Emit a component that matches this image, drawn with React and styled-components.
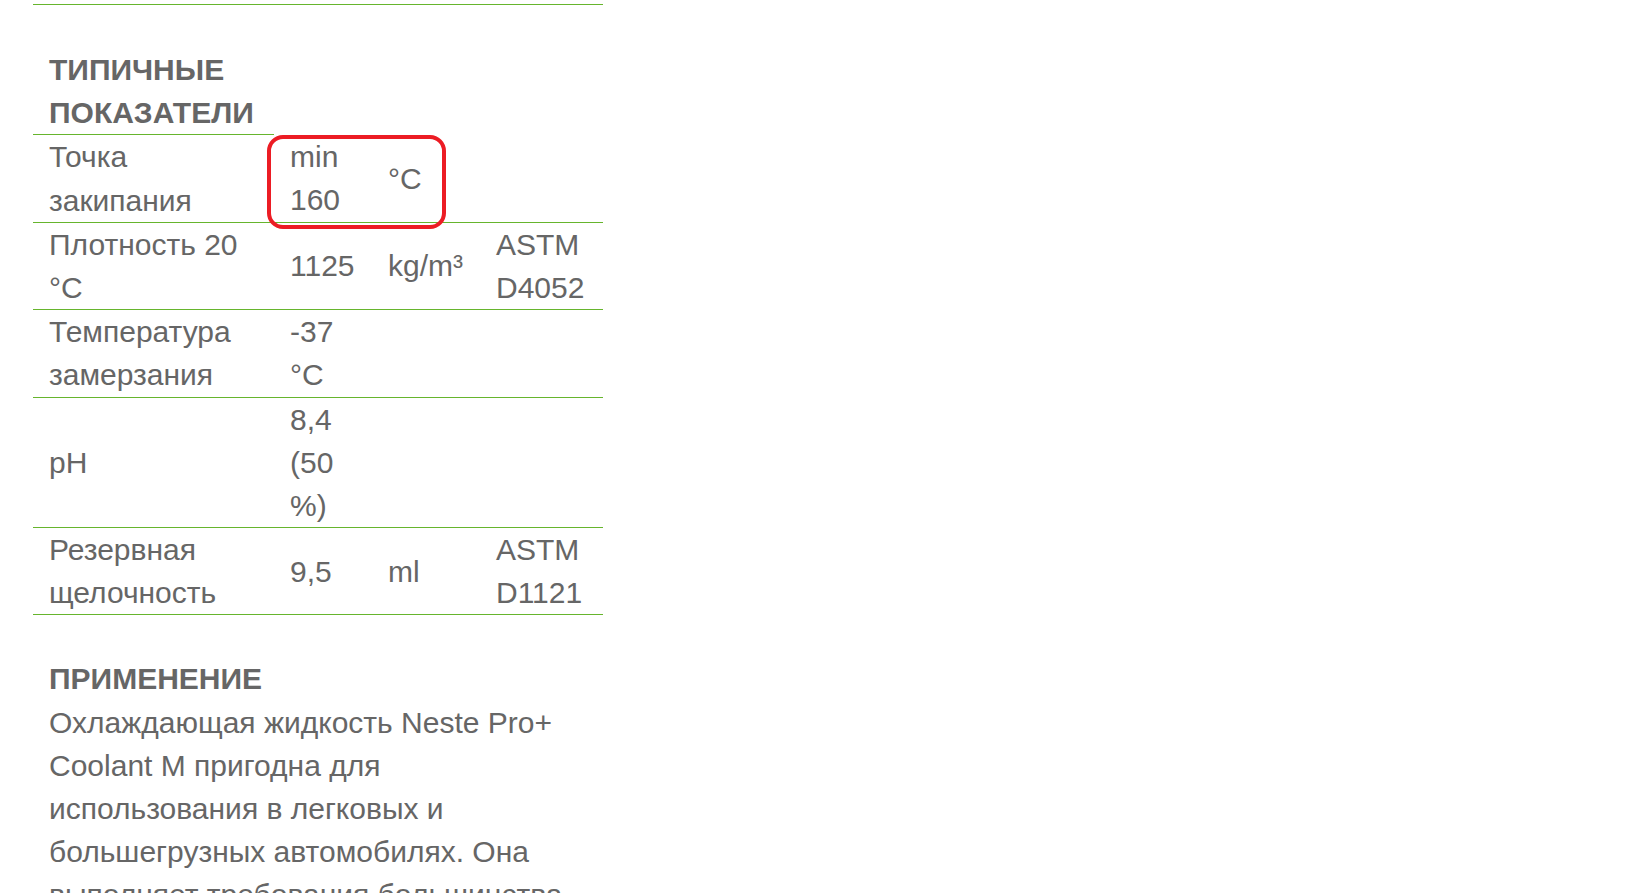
import React from 'react'
import styled, { createGlobalStyle } from 'styled-components'

const GlobalStyle = createGlobalStyle`
  html, body {
    margin: 0;
    padding: 0;
    background: #fff;
  }
  body {
    font-family: "Liberation Sans", Arial, sans-serif;
    font-size: 30px;
    line-height: 1.44;
    color: #666;
  }
`;

const Page = styled.div`
  width: 570px;
  margin-left: 33px;
  padding-top: 4px;
`;

const Divider = styled.div`
  height: 1px;
  background: #66b52d;
`;

const TableWrap = styled.div`
  position: relative;
  margin-top: 43px;
`;

const Table = styled.table`
  width: 570px;
  border-collapse: collapse;
  table-layout: fixed;
`;

const Th = styled.th`
  text-align: left;
  font-weight: 700;
  padding: 0 14px 0 16px;
  vertical-align: bottom;
  border-bottom: ${({ $line }) => ($line ? '1px solid #66b52d' : 'none')};
`;

const Td = styled.td`
  padding: 0 14px 0 16px;
  vertical-align: middle;
  border-bottom: 1px solid #66b52d;
`;

const Highlight = styled.div`
  position: absolute;
  left: 234px;
  top: 87px;
  width: 179px;
  height: 94px;
  box-sizing: border-box;
  border: 4px solid #ec1c24;
  border-radius: 16px;
  pointer-events: none;
`;

const Section = styled.div`
  margin-top: 42px;
  padding: 0 35px 0 16px;
`;

const Heading = styled.div`
  font-weight: 700;
`;

const Text = styled.p`
  margin: 0;
`;

const rows = [
  ['Точка закипания', 'min 160', '°C', ''],
  ['Плотность 20 °C', '1125', 'kg/m³', 'ASTM D4052'],
  ['Температура замерзания', '-37 °C', '', ''],
  ['pH', '8,4 (50 %)', '', ''],
  ['Резервная щелочность', '9,5', 'ml', 'ASTM D1121'],
];

const App = () => {
  return (
    <>
      <GlobalStyle />
      <Page>
        <Divider />
        <TableWrap>
          <Table>
            <colgroup>
              <col style={{ width: 241 }} />
              <col style={{ width: 98 }} />
              <col style={{ width: 108 }} />
              <col style={{ width: 123 }} />
            </colgroup>
            <thead>
              <tr>
                <Th $line>ТИПИЧНЫЕ ПОКАЗАТЕЛИ</Th>
                <Th />
                <Th />
                <Th />
              </tr>
            </thead>
            <tbody>
              {rows.map((r) => (
                <tr key={r[0]}>
                  {r.map((c, i) => (
                    <Td key={i}>{c}</Td>
                  ))}
                </tr>
              ))}
            </tbody>
          </Table>
          <Highlight />
        </TableWrap>
        <Section>
          <Heading>ПРИМЕНЕНИЕ</Heading>
          <Text>
            Охлаждающая жидкость Neste Pro+ Coolant M пригодна для использования в легковых и
            большегрузных автомобилях. Она выполняет требования большинства производителей
            автомобилей.
          </Text>
        </Section>
      </Page>
    </>
  )
}

export default App
